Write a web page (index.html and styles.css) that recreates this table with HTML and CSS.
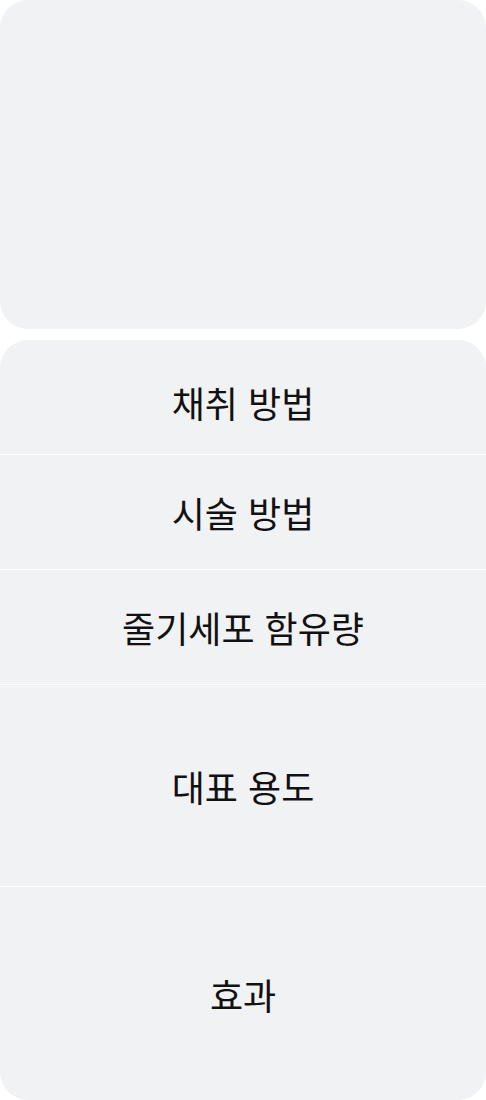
FILE: index.html
```html
<!DOCTYPE html>
<html lang="ko">
<head>
    <meta charset="UTF-8">
    <meta name="viewport" content="width=device-width, initial-scale=1.0">
    <title>줄기세포</title>
    <link rel="stylesheet" href="styles.css">
</head>
<body>

<div class="page">
    <div class="card card-top"></div>

    <div class="card menu">
        <div class="menu-item first">채취 방법</div>
        <div class="menu-item">시술 방법</div>
        <div class="menu-item">줄기세포 함유량</div>
        <div class="menu-item tall">대표 용도</div>
        <div class="menu-item taller">효과</div>
    </div>
</div>

</body>
</html>
```

FILE: styles.css
```css
body {
    font-family: "Noto Sans CJK KR", "Noto Sans", sans-serif;
    background-color: #fff;
    margin: 0;
    padding: 0;
}
.page {
    display: flex;
    flex-direction: column;
    gap: 11px;
}
.card {
    background-color: #f1f2f4;
    border-radius: 28px;
}
.card-top {
    height: 329px;
}
.menu {
    display: flex;
    flex-direction: column;
    height: 760px;
    overflow: hidden;
}
.menu-item {
    display: flex;
    align-items: center;
    justify-content: center;
    height: 114px;
    font-size: 36px;
    font-weight: 400;
    color: #111;
    border-bottom: 1px solid #fff;
}
.menu-item.first {
    padding-top: 10px;
    height: 104px;
}
.menu-item.tall {
    height: 201px;
}
.menu-item.taller {
    flex: 1;
    height: auto;
    border-bottom: none;
}
```
